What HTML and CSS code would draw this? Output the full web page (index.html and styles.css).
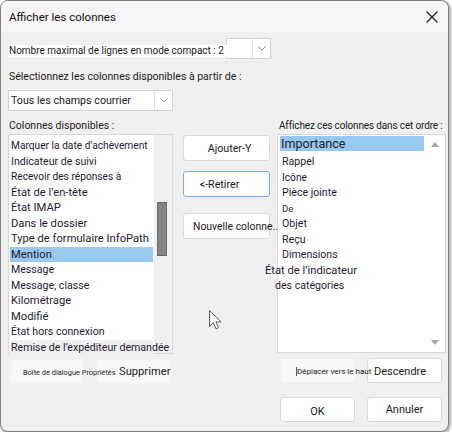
FILE: index.html
```html
<!DOCTYPE html>
<html lang="fr">
<head>
    <meta charset="UTF-8">
    <title>Afficher les colonnes</title>
    <link rel="stylesheet" href="styles.css">
</head>
<body>
    <div class="window">
        <div class="titlebar">
            <span class="title">Afficher les colonnes</span>
            <svg class="close" width="12" height="12" viewBox="0 0 12 12">
                <path d="M0.5 0.5 L11.5 11.5 M11.5 0.5 L0.5 11.5" stroke="#1a1a1a" stroke-width="1.1" fill="none"/>
            </svg>
        </div>
        <div class="content">
            <div class="compact-row">
                <span class="compact-label">Nombre maximal de lignes en mode compact : 2</span>
                <div class="combo combo-small">
                    <span class="combo-value"></span>
                    <span class="combo-arrow">
                        <svg width="8" height="5" viewBox="0 0 8 5"><path d="M0.5 0.5 L4 4 L7.5 0.5" stroke="#8a8a8a" fill="none"/></svg>
                    </span>
                </div>
            </div>
            <div class="source-label">Sélectionnez les colonnes disponibles à partir de :</div>
            <div class="combo combo-source">
                <span class="combo-value">Tous les champs courrier</span>
                <span class="combo-arrow">
                    <svg width="8" height="5" viewBox="0 0 8 5"><path d="M0.5 0.5 L4 4 L7.5 0.5" stroke="#8a8a8a" fill="none"/></svg>
                </span>
            </div>

            <div class="columns">
                <div class="col col-left">
                    <div class="col-label">Colonnes disponibles :</div>
                    <div class="listbox">
                        <ul class="items">
                            <li class="sm">Marquer la date d’achèvement</li>
                            <li class="md">Indicateur de suivi</li>
                            <li class="sm">Recevoir des réponses à</li>
                            <li class="lg">État de l’en-tête</li>
                            <li class="lg">État IMAP</li>
                            <li class="lg">Dans le dossier</li>
                            <li class="lg">Type de formulaire InfoPath</li>
                            <li class="lg selected">Mention</li>
                            <li class="md">Message</li>
                            <li class="md">Message, classe</li>
                            <li class="lg">Kilométrage</li>
                            <li class="lg">Modifié</li>
                            <li class="md">État hors connexion</li>
                            <li class="md hovered">Remise de l’expéditeur demandée</li>
                        </ul>
                        <div class="scrollbar">
                            <div class="thumb"></div>
                        </div>
                    </div>
                    <div class="btn-row">
                        <button class="btn flat btn-props"><span class="tiny">Boîte de dialogue Propriétés</span></button>
                        <button class="btn flat btn-delete">Supprimer</button>
                    </div>
                </div>

                <div class="col col-middle">
                    <button class="btn btn-mid btn-add">Ajouter-Y</button>
                    <button class="btn btn-mid btn-remove">&lt;-Retirer</button>
                    <button class="btn btn-mid btn-new">Nouvelle colonne...</button>
                </div>

                <div class="col col-right">
                    <div class="col-label">Affichez ces colonnes dans cet ordre :</div>
                    <div class="listbox listbox-right">
                        <ul class="items">
                            <li class="xl selected first">Importance</li>
                            <li class="md">Rappel</li>
                            <li class="sm">Icône</li>
                            <li class="md">Pièce jointe</li>
                            <li class="xs">De</li>
                            <li class="md">Objet</li>
                            <li class="md">Reçu</li>
                            <li class="md">Dimensions</li>
                            <li class="lg out-1">État de l’indicateur</li>
                            <li class="md out-2">des catégories</li>
                        </ul>
                        <div class="scrollbar arrows">
                            <svg width="8" height="5" viewBox="0 0 8 5"><path d="M0 5 L4 0 L8 5 Z" fill="#a6a6a6"/></svg>
                            <svg width="8" height="5" viewBox="0 0 8 5"><path d="M0 0 L4 5 L8 0 Z" fill="#a6a6a6"/></svg>
                        </div>
                    </div>
                    <div class="btn-row">
                        <button class="btn flat btn-up"><span class="tiny caret">Déplacer vers le haut</span></button>
                        <button class="btn btn-down">Descendre</button>
                    </div>
                    <div class="btn-row footer">
                        <button class="btn btn-ok">OK</button>
                        <button class="btn btn-cancel">Annuler</button>
                    </div>
                </div>
            </div>
        </div>

        <svg class="pointer" width="13" height="20" viewBox="0 0 13 20">
            <path d="M0.5 0.5 L0.5 16.5 L4.3 12.8 L7 18.8 L9.6 17.7 L7 11.9 L12.2 11.9 Z" fill="#ffffff" stroke="#5a5a5a" stroke-width="1"/>
        </svg>
    </div>
</body>
</html>
```

FILE: styles.css
```css
* {
    box-sizing: border-box;
}
body {
    margin: 0;
    background: #ffffff;
    font-family: Roboto, "Noto Sans", sans-serif;
    color: #1a1a1a;
}
.window {
    position: relative;
    width: 449px;
    height: 432px;
    border: 1px solid #7f7f7f;
    border-radius: 8px;
    background: #f0f0f0;
    box-shadow: 1px 1px 2px 1px rgba(0, 0, 0, 0.3);
    overflow: hidden;
}
.titlebar {
    height: 31px;
    display: flex;
    align-items: center;
    justify-content: space-between;
    background: #f6f4f6;
    padding: 0 10px 0 8px;
}
.title {
    font-size: 11.5px;
    color: #111;
}
.content {
    padding-left: 7px;
}
.compact-row {
    display: flex;
    margin-top: 6px;
    height: 21px;
}
.compact-label {
    position: relative;
    z-index: 1;
    width: 226px;
    height: 12px;
    margin-top: 7px;
    padding-left: 1px;
    line-height: 12px;
    font-size: 10px;
    background: #ffffff;
    white-space: nowrap;
}
.combo {
    display: flex;
    height: 21px;
    border: 1px solid #d4d4d4;
    background: #ffffff;
}
.combo-small {
    width: 45px;
    margin-left: -8px;
}
.combo-source {
    width: 165px;
    margin-top: 5px;
}
.combo-value {
    flex: 1;
    padding-left: 2px;
    line-height: 19px;
    font-size: 10.7px;
    white-space: nowrap;
}
.combo-arrow {
    width: 18px;
    border-left: 1px solid #e2e2e2;
    display: flex;
    align-items: center;
    justify-content: center;
}
.source-label {
    margin-top: 10px;
    line-height: 16px;
    font-size: 10.5px;
    padding-left: 1px;
}
.columns {
    display: flex;
    margin-top: 7px;
}
.col-left {
    width: 165px;
    flex-shrink: 0;
}
.col-middle {
    width: 87px;
    flex-shrink: 0;
    margin-left: 10px;
    padding-top: 17px;
    display: flex;
    flex-direction: column;
}
.col-right {
    width: 169px;
    flex-shrink: 0;
    margin-left: 7px;
}
.col-label {
    line-height: 16px;
    font-size: 10.5px;
    padding-left: 1px;
    white-space: nowrap;
}
.col-right .col-label {
    padding-left: 2px;
    font-size: 10px;
    letter-spacing: -0.15px;
}
.listbox {
    display: flex;
    height: 220px;
    border: 1px solid #d9d9d9;
    background: #ffffff;
}
.listbox-right {
    height: 219px;
}
.items {
    flex: 1;
    min-width: 0;
    list-style: none;
    margin: 0;
    padding: 3px 0 0 0;
    color: #1f1a30;
}
.items li {
    height: 15.5px;
    line-height: 15.5px;
    padding-left: 2px;
    white-space: nowrap;
}
.items .xs { font-size: 9.5px; }
.items .sm { font-size: 10.2px; }
.items .md { font-size: 10.6px; }
.items .lg { font-size: 11.2px; }
.items .xl { font-size: 12.6px; }
.items .selected {
    background: #99c9ef;
    margin: 0 1px;
    padding-left: 1px;
}
.items .hovered {
    position: relative;
    z-index: 1;
    background: #f0f0f0;
    margin: 0 1px;
    padding-left: 1px;
}
.listbox-right .items {
    padding: 1px 0 0 0;
}
.listbox-right .items li {
    padding-left: 4px;
}
.listbox-right .items .first {
    height: 15px;
    line-height: 15px;
    margin: 0 0 3px 2px;
    padding-left: 1px;
}
.items .out-1 {
    margin-left: -17px;
}
.items .out-2 {
    margin-left: -7px;
}
.scrollbar {
    width: 18px;
    flex-shrink: 0;
    background: #f0f0f0;
    padding: 67px 0 0 3px;
}
.thumb {
    width: 10px;
    height: 54px;
    background: #858585;
    border: 1px solid #6b6b6b;
}
.arrows {
    width: 21px;
    background: #ffffff;
    padding: 7px 0 7px 0;
    display: flex;
    flex-direction: column;
    justify-content: space-between;
    align-items: center;
}
.btn {
    width: 75px;
    height: 25px;
    flex-shrink: 0;
    padding: 0;
    border: 1px solid #dadada;
    border-radius: 3px;
    background: #ffffff;
    font-family: inherit;
    font-size: 11px;
    color: #1a1a1a;
    white-space: nowrap;
    text-align: center;
}
.btn.flat {
    background: #f8f8f8;
    border-color: #f2f2f2;
    text-align: left;
}
.btn-row {
    display: flex;
    gap: 12px;
    margin-top: 5px;
    padding-left: 1px;
}
.col-right .btn-row {
    padding-left: 3px;
}
.btn-row.footer {
    margin-top: 14px;
}
.tiny {
    position: relative;
    z-index: 1;
    font-size: 7.4px;
}
.caret {
    font-size: 8px;
    border-left: 1px solid #555;
}
.btn.btn-props {
    padding-left: 13px;
}
.btn.btn-delete {
    padding-left: 22px;
    font-size: 11.2px;
}
.btn.btn-up {
    padding-left: 15px;
}
.btn.btn-down {
    text-align: left;
    padding: 2px 0 0 6px;
    font-size: 11px;
}
.btn.btn-ok {
    padding-top: 3px;
}
.btn-mid {
    width: 87px;
    height: 26px;
    font-size: 10.7px;
    overflow: visible;
}
.btn.btn-add {
    padding-left: 6px;
}
.btn.btn-remove {
    margin-top: 10px;
    border-color: #6fb0ea;
    padding-right: 14px;
}
.btn.btn-new {
    margin-top: 16px;
    text-align: left;
    padding-left: 9px;
    font-size: 10.4px;
}
.pointer {
    position: absolute;
    left: 208px;
    top: 309px;
}
```
